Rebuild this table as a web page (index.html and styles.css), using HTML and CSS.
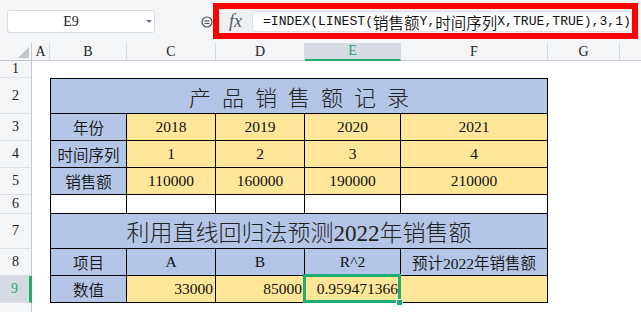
FILE: index.html
```html
<!DOCTYPE html>
<html lang="zh-CN">
<head>
<meta charset="utf-8">
<title>产品销售额记录</title>
<link rel="stylesheet" href="styles.css">
</head>
<body>
<div class="toolbar">
  <div class="namebox"><span class="name">E9</span><span class="caret"></span></div>
  <svg class="zoomicon" viewBox="0 0 12 12" width="12" height="12" aria-hidden="true">
    <circle cx="6" cy="6" r="5" fill="none" stroke="#4a4f5a" stroke-width="1.2"/>
    <line x1="3.5" y1="5" x2="8.5" y2="5" stroke="#4a4f5a" stroke-width="1.1"/>
    <line x1="3.5" y1="7.5" x2="8.5" y2="7.5" stroke="#4a4f5a" stroke-width="1.1"/>
  </svg>
  <div class="fbox">
    <div class="fx">fx</div>
    <div class="finput">=INDEX(LINEST(<span class="cj">销售额</span>Y,<span class="cj">时间序列</span>X,TRUE,TRUE),3,1)</div>
  </div>
</div>
<div class="sheet">
  <div class="ch corner"><span class="tri"></span></div>
  <div class="ch">A</div>
  <div class="ch">B</div>
  <div class="ch">C</div>
  <div class="ch">D</div>
  <div class="ch sel">E</div>
  <div class="ch">F</div>
  <div class="ch">G</div>
  <div class="ch last"></div>

  <div class="rh">1</div>
  <div class="rh">2</div>
  <div class="rh">3</div>
  <div class="rh">4</div>
  <div class="rh">5</div>
  <div class="rh">6</div>
  <div class="rh">7</div>
  <div class="rh">8</div>
  <div class="rh sel">9</div>
  <div class="rh"></div>

  <div class="tbl">
    <div class="c b title t1">产 品 销 售 额 记 录</div>

    <div class="c b">年份</div>
    <div class="c y">2018</div>
    <div class="c y">2019</div>
    <div class="c y">2020</div>
    <div class="c y">2021</div>

    <div class="c b">时间序列</div>
    <div class="c y">1</div>
    <div class="c y">2</div>
    <div class="c y">3</div>
    <div class="c y">4</div>

    <div class="c b">销售额</div>
    <div class="c y">110000</div>
    <div class="c y">160000</div>
    <div class="c y">190000</div>
    <div class="c y">210000</div>

    <div class="c w"></div>
    <div class="c w"></div>
    <div class="c w"></div>
    <div class="c w"></div>
    <div class="c w"></div>

    <div class="c b title t2">利用直线回归法预测2022年销售额</div>

    <div class="c b">项目</div>
    <div class="c b">A</div>
    <div class="c b">B</div>
    <div class="c b">R^2</div>
    <div class="c b">预计2022年销售额</div>

    <div class="c b">数值</div>
    <div class="c y num">33000</div>
    <div class="c y num">85000</div>
    <div class="c y num">0.959471366</div>
    <div class="c y"></div>

    <div class="selbox"></div>
    <div class="handle"></div>
  </div>
</div>
</body>
</html>
```
FILE: styles.css
```css
html, body {
  margin: 0;
  padding: 0;
}
body {
  width: 641px;
  height: 312px;
  overflow: hidden;
  background: #ffffff;
  font-family: "Liberation Serif", "Noto Sans CJK SC", serif;
  color: #111;
}

/* ---------- top toolbar ---------- */
.toolbar {
  height: 43px;
  box-sizing: border-box;
  background: #f4f5f7;
  display: flex;
  align-items: flex-start;
  padding-left: 7px;
}
.namebox {
  margin-top: 10px;
  width: 148px;
  height: 23px;
  box-sizing: border-box;
  background: #fff;
  border: 1px solid #d9dce2;
  border-radius: 3px;
  display: flex;
  align-items: center;
}
.name {
  flex: 1;
  text-align: center;
  padding-right: 12px;
  font-size: 14px;
  color: #222;
}
.caret {
  width: 0;
  height: 0;
  border-left: 3px solid transparent;
  border-right: 3px solid transparent;
  border-top: 3px solid #6b7385;
  margin-right: 2px;
}
.zoomicon {
  margin: 16px 0 0 46px;
  flex: none;
}
.fbox {
  margin-top: 3px;
  width: 425px;
  height: 36px;
  box-sizing: border-box;
  border: 6px solid #ff0000;
  background: #eff0f3;
  display: flex;
}
.fx {
  width: 33px;
  flex: none;
  display: flex;
  align-items: center;
  justify-content: center;
  font-style: italic;
  font-size: 18px;
  color: #555a66;
}
.finput {
  flex: 1;
  margin: 2px 0 1px 0;
  background: #fff;
  border: 1px solid #dcdfe5;
  border-radius: 3px;
  display: flex;
  align-items: center;
  padding-left: 10px;
  white-space: nowrap;
  overflow: hidden;
  font-family: "Liberation Mono", "Noto Sans CJK SC", monospace;
  font-size: 13.1px;
  color: #111;
}
.cj {
  font-family: "Noto Sans CJK SC", sans-serif;
  font-size: 15.5px;
  font-weight: 350;
}

/* ---------- sheet ---------- */
.sheet {
  display: grid;
  grid-template-columns: 32px 18px 77px 89px 89px 96px 147px 72px 1fr;
  grid-template-rows: 18px 17px 36px 27px 27px 27px 19px 35px 27px 27px 10px;
}
.ch {
  box-sizing: border-box;
  background: #f4f5f7;
  border-bottom: 1px solid #c3c8d1;
  border-right: 1px solid #d3d7de;
  display: flex;
  align-items: center;
  justify-content: center;
  font-size: 14px;
  color: #222;
}
.ch.last {
  border-right: none;
}
.ch.sel {
  background: #d6dbe3;
  color: #1aa868;
  border-bottom: 2px solid #1fae6f;
}
.corner {
  align-items: flex-end;
  justify-content: flex-end;
  border-right: 1px solid #c3c8d1;
}
.tri {
  width: 0;
  height: 0;
  border-left: 11px solid transparent;
  border-bottom: 11px solid #c3c7cf;
  margin: 0 2px 2px 0;
}
.rh {
  grid-column: 1;
  box-sizing: border-box;
  background: #f4f5f7;
  border-right: 1px solid #c3c8d1;
  border-bottom: 1px solid #dde0e6;
  display: flex;
  align-items: center;
  justify-content: center;
  font-size: 14px;
  color: #222;
}
.rh.sel {
  background: #d6dbe3;
  color: #1aa868;
  border-right: 3px solid #1fae6f;
}

/* ---------- data table ---------- */
.tbl {
  grid-column: 3 / 8;
  grid-row: 3 / 11;
  position: relative;
  display: grid;
  grid-template-columns: 76px 89px 89px 96px 147px;
  grid-template-rows: 35px 27px 27px 27px 19px 35px 27px 27px;
  border-left: 1px solid #000;
  border-top: 1px solid #000;
}
.c {
  box-sizing: border-box;
  border-right: 1px solid #000;
  border-bottom: 1px solid #000;
  display: flex;
  align-items: center;
  justify-content: center;
  font-size: 15.5px;
  font-weight: 350;
  color: #111;
  white-space: nowrap;
}
.b { background: #b4c6e7; }
.y { background: #ffe699; }
.w { background: #ffffff; }
.title {
  grid-column: 1 / -1;
  color: #222;
  font-weight: 300;
}
.t1 {
  font-size: 22px;
  word-spacing: 5.5px;
}
.t2 {
  font-size: 23px;
}
.num {
  justify-content: flex-end;
  padding-right: 2px;
}

/* selection overlay on E9 */
.selbox {
  position: absolute;
  left: 252px;
  top: 195px;
  width: 98px;
  height: 29px;
  box-sizing: border-box;
  border: 3px solid #1fae6f;
}
.handle {
  position: absolute;
  left: 345px;
  top: 220px;
  width: 7px;
  height: 7px;
  box-sizing: border-box;
  background: #1fae6f;
  border: 1px solid #fff;
}
```
